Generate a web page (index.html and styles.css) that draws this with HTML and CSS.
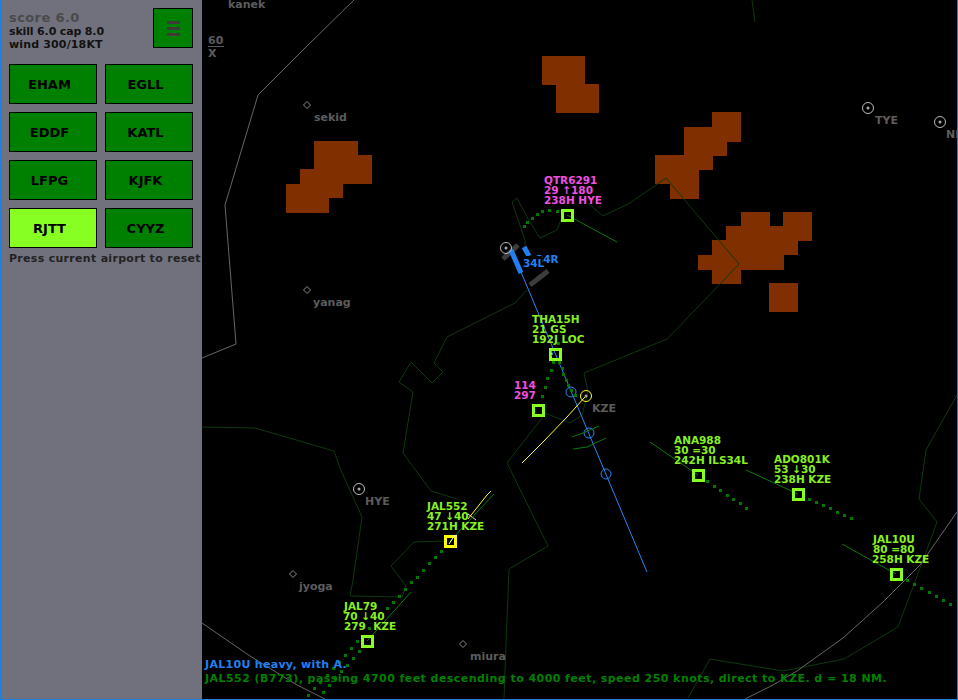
FILE: index.html
```html
<!DOCTYPE html>
<html lang="en">
<head>
<meta charset="utf-8">
<title>Radar</title>
<link rel="stylesheet" href="styles.css">
</head>
<body>
<div class="app">
  <aside class="side">
    <div class="head">
      <div class="stats">
        <div class="score">score 6.0</div>
        <div class="stat skill">skill 6.0 cap 8.0</div>
        <div class="stat wind">wind 300/18KT</div>
      </div>
      <button class="btn menu" aria-label="menu"><span></span><span></span><span></span></button>
    </div>
    <div class="airports">
      <button class="btn">EHAM</button>
      <button class="btn">EGLL</button>
      <button class="btn">EDDF</button>
      <button class="btn">KATL</button>
      <button class="btn">LFPG</button>
      <button class="btn">KJFK</button>
      <button class="btn on">RJTT</button>
      <button class="btn">CYYZ</button>
    </div>
    <p class="hint">Press current airport to reset</p>
  </aside>
  <svg class="map" viewBox="202 0 755 699" width="755" height="699">
    <path class="wx" d="M542 56h43v28h14v29h-43v-28h-14zM314 141h44v14h14v29h-29v14h-14v15h-43v-29h14v-15h14zM712 112h29v30h-14v14h-14v14h-14v29h-29v-15h-15v-29h29v-28h28zM741 212h29v14h13v-14h29v29h-14v14h-14v15h-43v14h-29v-14h-14v-15h14v-15h14v-14h15zM769 283h29v29h-29z"/>

    <g class="bound">
      <polyline points="525,247 525,240 512,202 517,198 527,217 540,238 557,230 563,215"/>
      <polyline points="527,290 515,303 447,337 434,363 443,372 432,383 411,362 399,382 413,392 403,453 431,491 457,499"/>
      <polyline points="202,427 255,428 334,451 340,468 362,517 353,580 350,596 402,597 406,586 391,566 414,542 445,541"/>
      <polyline points="545,414 507,463 548,546 509,569 505,670 504,699"/>
      <polyline points="545,413 570,423 582,415 588,392 584,373 667,339 722,282 739,264 666,178 630,203 603,216 588,203"/>
      <polyline points="957,395 940,425 926,450 919,499 937,522 922,563 898,627 844,659 783,671 710,659 688,698"/>
      <polyline points="752,0 755,22"/>
    </g>
    <g class="gray">
      <polyline points="354,0 307,46 258,95 225,205 236,344 202,358"/>
      <polyline points="202,623 250,656 297,685 325,699"/>
      <polyline points="957,512 920,565 883,602 843,638 797,671 773,685 745,699"/>
    </g>

    <g class="rwy-dark">
      <line x1="503" y1="259" x2="518" y2="245"/>
      <line x1="530" y1="285" x2="548" y2="271"/>
    </g>
    <g class="rwy">
      <line x1="511" y1="250" x2="521" y2="273"/>
      <line x1="524" y1="247" x2="529" y2="256"/>
    </g>
    <g class="ils">
      <line x1="521" y1="272" x2="647" y2="572"/>
      <circle cx="571" cy="392" r="5"/>
      <circle cx="589" cy="433" r="5"/>
      <circle cx="606" cy="474" r="5"/>
    </g>
    <g class="arc">
      <polyline points="572,437 583,433 599,426"/>
      <polyline points="573,449 587,447 606,438"/>
    </g>

    <g class="way">
      <path d="M307 101.500l3.500 3.500-3.500 3.500-3.500-3.500zM307 286.500l3.500 3.500-3.500 3.500-3.500-3.500zM293 570.500l3.500 3.500-3.500 3.500-3.500-3.500zM463 640.500l3.500 3.500-3.500 3.500-3.500-3.500z"/>
    </g>
    <g class="vor">
      <circle cx="359" cy="489" r="5.500"/>
      <circle cx="868" cy="108" r="5.500"/>
      <circle cx="940" cy="122" r="5.500"/>
      <circle cx="506" cy="248" r="5.500"/>
    </g>
    <g class="vordot">
      <circle cx="359" cy="489" r="1.500"/>
      <circle cx="868" cy="108" r="1.500"/>
      <circle cx="940" cy="122" r="1.500"/>
      <circle cx="506" cy="248" r="1.500"/>
      <circle cx="586" cy="396" r="1.500"/>
    </g>

    <g class="fix">
      <text x="228" y="8">kanek</text>
      <text x="314" y="121">sekid</text>
      <text x="313" y="306">yanag</text>
      <text x="299" y="590">jyoga</text>
      <text x="470" y="660">miura</text>
      <text x="365" y="505">HYE</text>
      <text x="875" y="124">TYE</text>
      <text x="946" y="138">NE</text>
      <text x="592" y="412">KZE</text>
      <text x="208" y="44">60</text>
      <text x="208" y="57">X</text>
    </g>
    <line class="frac" x1="208" y1="46.500" x2="224" y2="46.500"/>

    <text class="rwytext" x="536" y="263">34R</text>
    <rect class="rwybox" x="522" y="256" width="20" height="13"/>
    <text class="rwytext" x="523" y="267">34L</text>

    <g class="yellow">
      <circle cx="586" cy="396" r="5.500"/>
      <polyline points="585,397 567,417 543,442 522,463"/>
      <polyline points="491,491 487,495 468,519"/>
      <line x1="468" y1="514" x2="476" y2="520"/>
    </g>

    <g class="vec">
      <line x1="567" y1="215" x2="617" y2="242"/>
      <line x1="650" y1="442" x2="698" y2="475"/>
      <line x1="746" y1="470" x2="798" y2="494"/>
      <line x1="842" y1="544" x2="896" y2="574"/>
      <line x1="450" y1="541" x2="494" y2="494"/>
      <line x1="367" y1="641" x2="411" y2="592"/>
    </g>

    <path class="dots" d="M523 225h3v3h-3zM526 221h3v3h-3zM531 217h3v3h-3zM536 213h3v3h-3zM541 210h3v3h-3zM548 209h3v3h-3zM556 210h3v3h-3zM557 342h3v3h-3zM552 361h3v3h-3zM558 361h3v3h-3zM561 367h3v3h-3zM562 373h3v3h-3zM565 379h3v3h-3zM567 384h3v3h-3zM570 389h3v3h-3zM574 394h3v3h-3zM550 369h3v3h-3zM546 377h3v3h-3zM544 386h3v3h-3zM541 395h3v3h-3zM440 550h3v3h-3zM434 556h3v3h-3zM428 562h3v3h-3zM422 569h3v3h-3zM416 576h3v3h-3zM410 581h3v3h-3zM404 588h3v3h-3zM398 595h3v3h-3zM392 601h3v3h-3zM386 607h3v3h-3zM368 627h3v3h-3zM356 640h3v3h-3zM350 647h3v3h-3zM344 654h3v3h-3zM338 661h3v3h-3zM332 667h3v3h-3zM326 674h3v3h-3zM319 681h3v3h-3zM313 687h3v3h-3zM307 694h3v3h-3zM358 650h3v3h-3zM352 657h3v3h-3zM346 664h3v3h-3zM340 670h3v3h-3zM334 677h3v3h-3zM328 684h3v3h-3zM322 691h3v3h-3zM706 480h3v3h-3zM713 485h3v3h-3zM719 489h3v3h-3zM726 494h3v3h-3zM732 498h3v3h-3zM739 502h3v3h-3zM745 507h3v3h-3zM808 498h3v3h-3zM815 501h3v3h-3zM822 504h3v3h-3zM829 507h3v3h-3zM836 511h3v3h-3zM843 514h3v3h-3zM850 517h3v3h-3zM906 579h3v3h-3zM913 583h3v3h-3zM920 587h3v3h-3zM928 591h3v3h-3zM935 595h3v3h-3zM942 599h3v3h-3zM949 603h3v3h-3z"/>

    <g class="plane">
      <rect x="562.500" y="210.500" width="10" height="10"/>
      <rect x="550.500" y="349.500" width="10" height="10"/>
      <rect x="533.500" y="405.500" width="10" height="10"/>
      <rect x="362.500" y="636.500" width="10" height="10"/>
      <rect x="693.500" y="470.500" width="10" height="10"/>
      <rect x="793.500" y="489.500" width="10" height="10"/>
      <rect x="891.500" y="569.500" width="10" height="10"/>
    </g>
    <rect class="plane-sel" x="445.500" y="536.500" width="10" height="10"/>
    <line class="tick" x1="449" y1="544" x2="455" y2="535"/>
    <polyline class="ils" points="551,351 553,354 551,356"/>

    <g class="lbl">
      <text x="532" y="323">THA15H</text>
      <text x="532" y="333">21 GS</text>
      <text x="532" y="343">192J LOC</text>
      <text x="674" y="444">ANA988</text>
      <text x="674" y="454">30 =30</text>
      <text x="674" y="464">242H ILS34L</text>
      <text x="774" y="463">ADO801K</text>
      <text x="774" y="473">53 ↓30</text>
      <text x="774" y="483">238H KZE</text>
      <text x="873" y="543">JAL10U</text>
      <text x="873" y="553">80 =80</text>
      <text x="872" y="563">258H KZE</text>
      <text x="427" y="510">JAL552</text>
      <text x="427" y="520">47 ↓40</text>
      <text x="427" y="530">271H KZE</text>
      <text x="344" y="610">JAL79</text>
      <text x="343" y="620">70 ↓40</text>
      <text x="344" y="630">279  KZE</text>
    </g>
    <g class="lbl pink">
      <text x="544" y="184">QTR6291</text>
      <text x="544" y="194">29 ↑180</text>
      <text x="544" y="204">238H HYE</text>
      <text x="514" y="389">114</text>
      <text x="514" y="399">297</text>
    </g>
    <text class="say blue" x="205" y="668">JAL10U heavy, with A.</text>
    <text class="say green" x="205" y="682">JAL552 (B773), passing 4700 feet descending to 4000 feet, speed 250 knots, direct to KZE. d = 18 NM.</text>
  </svg>
</div>
</body>
</html>
```
FILE: styles.css
```css
* { box-sizing: border-box; }
html, body { margin: 0; height: 100%; background: #000; overflow: hidden; }
body { font-family: "DejaVu Sans", sans-serif; font-weight: bold; }

.app {
  display: flex;
  width: 958px;
  height: 700px;
  border: solid #2080e0;
  border-width: 0 1px 1px 2px;
  background: #000;
}
.side {
  width: 200px;
  flex: none;
  padding: 8px 0 0 7px;
  background: #71717d;
}
.head { display: flex; justify-content: space-between; width: 184px; height: 56px; }
.stats { padding-top: 2px; }
.score { font-size: 13px; line-height: 15px; color: #4a4a4a; letter-spacing: .4px; }
.stat { font-size: 11px; line-height: 13px; color: #111; }
.skill { letter-spacing: -.15px; }
.wind { letter-spacing: .15px; }
.btn {
  display: block;
  padding: 0 7px 0 0;
  width: 88px;
  height: 40px;
  border: 1px solid #000;
  background: #008000;
  color: #000;
  font: bold 13px "DejaVu Sans", sans-serif;
}
.btn.on { background: #88ff22; }
.menu {
  display: flex;
  flex-direction: column;
  align-items: center;
  justify-content: center;
  gap: 3px;
  width: 40px;
  padding: 0;
}
.menu span { flex: none; width: 13px; height: 3px; background: #3c3c3c; }
.airports { display: grid; grid-template-columns: 88px 88px; gap: 8px; }
.hint { margin: 4px 0 0; font-size: 11px; line-height: 13px; color: #222; letter-spacing: .3px; white-space: nowrap; }

.map { flex: none; display: block; background: #000; }
.map text { font-family: "DejaVu Sans", sans-serif; font-weight: bold; font-size: 11px; white-space: pre; }
.wx { fill: #803000; }
.bound polyline { fill: none; stroke: #0f380f; stroke-width: 1; }
.gray polyline { fill: none; stroke: #666; stroke-width: 1; }
.rwy-dark line { stroke: #3c3c3c; stroke-width: 5; }
.rwy line { stroke: #2080f0; stroke-width: 5; }
.ils line, .ils circle, polyline.ils { fill: none; stroke: #2a86f0; stroke-width: 1; }
.arc polyline { fill: none; stroke: #0a7a0a; stroke-width: 1; }
.way path { fill: none; stroke: #888; stroke-width: 1; }
.vor circle { fill: none; stroke: #bbb; stroke-width: 1; }
.vordot circle { fill: #aaa; }
.fix text { fill: #5c5c5c; }
.frac { stroke: #5c5c5c; stroke-width: 1; }
.map .rwytext { fill: #2080f0; font-size: 10.5px; }
.rwybox { fill: #000; }
.yellow circle, .yellow polyline, .yellow line { fill: none; stroke: #ffff20; stroke-width: 1; }
.yellow line { stroke: #ddd; }
.vec line { stroke: #0a7a0a; stroke-width: 1; }
.dots { fill: #007800; }
.plane rect { fill: none; stroke: #88ff22; stroke-width: 3; }
.plane-sel { fill: none; stroke: #ffff00; stroke-width: 3; }
.tick { stroke: #fff; stroke-width: 1; }
.map .lbl text { fill: #88f020; font-size: 10.5px; }
.map .lbl.pink text { fill: #f050e0; }
.say.blue { fill: #2080f0; letter-spacing: .3px; }
.say.green { fill: #008000; letter-spacing: .45px; }
```
